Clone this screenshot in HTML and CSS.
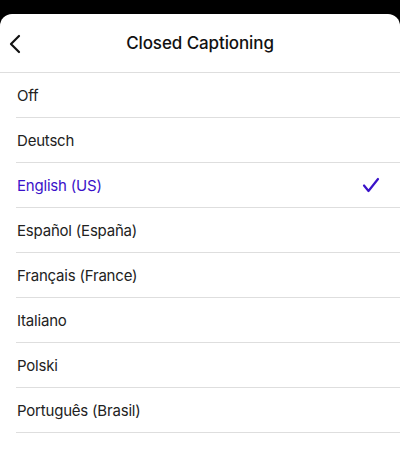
FILE: index.html
```html
<!DOCTYPE html>
<html>
<head>
<meta charset="utf-8">
<link rel="stylesheet" href="styles.css">
</head>
<body>
<div class="sheet">
  <div class="header">
    <svg class="back" width="14" height="20" viewBox="0 0 14 20"><path d="M11 2 L3 10 L11 18" fill="none" stroke="#111" stroke-width="2.2" stroke-linecap="round" stroke-linejoin="round"/></svg>
    <div class="title">Closed Captioning</div>
  </div>
  <ul class="list">
    <li class="row">Off</li>
    <li class="row">Deutsch</li>
    <li class="row selected">English (US)
      <svg class="check" width="18" height="16" viewBox="0 0 18 16"><path d="M2 8.5 L6.5 14 L16 2" fill="none" stroke="#3a12c9" stroke-width="2.2" stroke-linecap="round" stroke-linejoin="round"/></svg>
    </li>
    <li class="row">Español (España)</li>
    <li class="row">Français (France)</li>
    <li class="row">Italiano</li>
    <li class="row">Polski</li>
    <li class="row">Português (Brasil)</li>
  </ul>
</div>
</body>
</html>
```
FILE: styles.css
```css
html, body {
  margin: 0;
  padding: 0;
  background: #000;
  height: 100%;
}
body {
  font-family: Inter, "Noto Sans", sans-serif;
  overflow: hidden;
}
.sheet {
  margin-top: 14px;
  background: #fff;
  border-radius: 12px 12px 0 0;
  height: calc(100% - 14px);
}
.header {
  position: relative;
  height: 58px;
  border-bottom: 1px solid #dedede;
  display: flex;
  align-items: center;
  justify-content: center;
}
.back {
  position: absolute;
  left: 8px;
  top: 20px;
}
.title {
  font-size: 17px;
  font-weight: 500;
  color: #111;
  letter-spacing: -0.1px;
}
.list {
  list-style: none;
  margin: 0;
  padding: 0;
}
.row {
  margin-left: 16px;
  height: 44px;
  border-bottom: 1px solid #dedede;
  display: flex;
  align-items: center;
  justify-content: space-between;
  padding-left: 1px;
  padding-right: 20px;
  font-size: 15px;
  letter-spacing: -0.2px;
  color: #222;
}
.row.selected {
  color: #3a12c9;
}
.check {
  display: block;
}
```
